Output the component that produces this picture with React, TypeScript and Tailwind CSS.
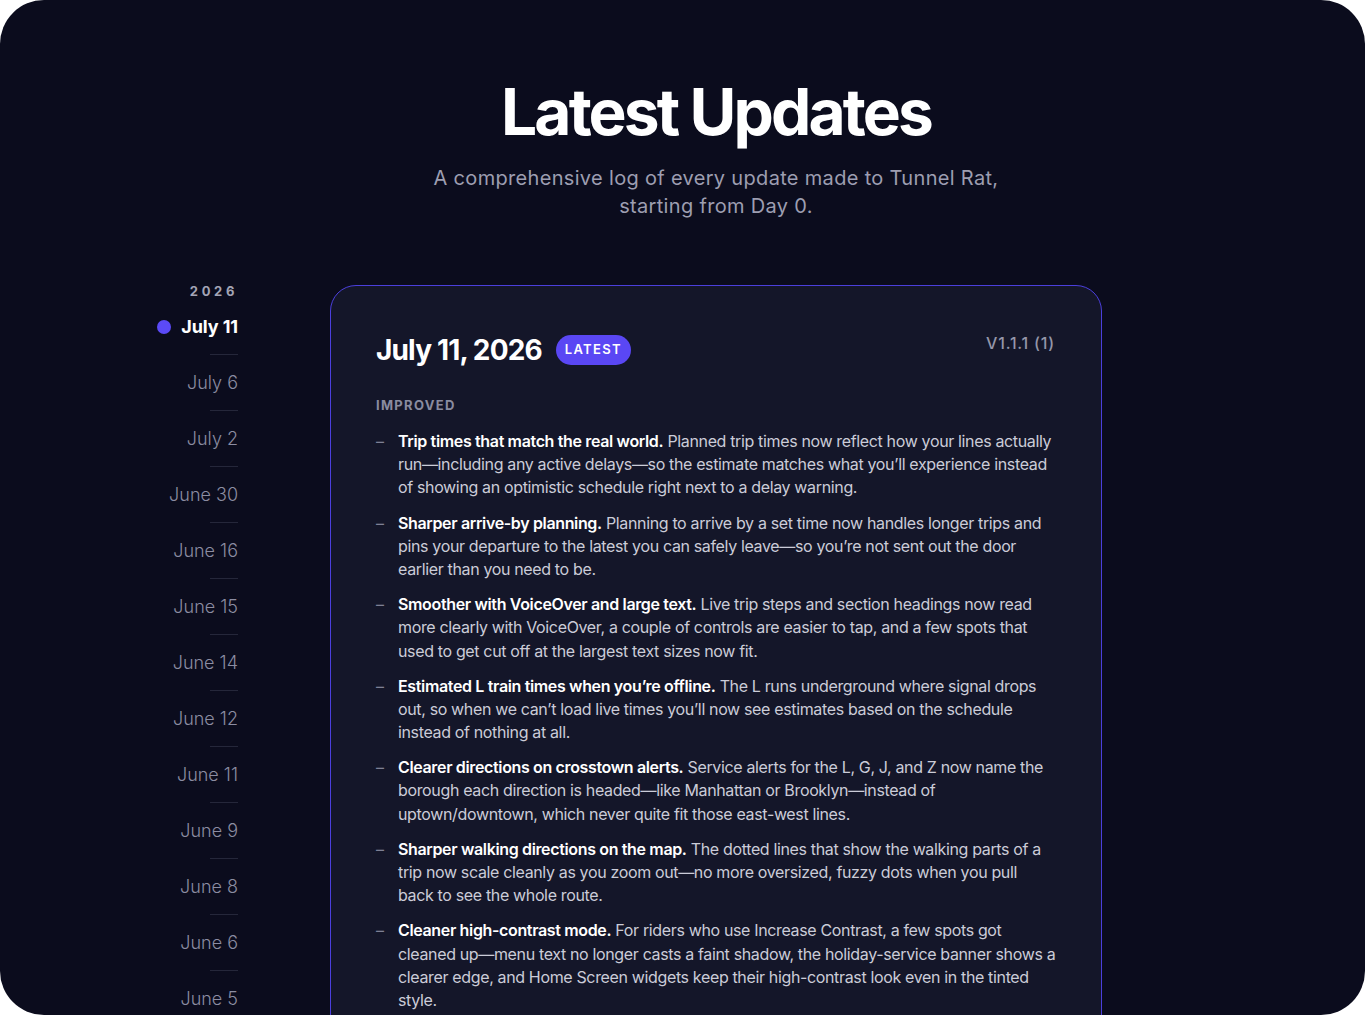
import React from 'react';

const dates = [
  'July 11',
  'July 6',
  'July 2',
  'June 30',
  'June 16',
  'June 15',
  'June 14',
  'June 12',
  'June 11',
  'June 9',
  'June 8',
  'June 6',
  'June 5',
  'June 4',
];

const improved = [
  {
    title: 'Trip times that match the real world.',
    body: 'Planned trip times now reflect how your lines actually run—including any active delays—so the estimate matches what you’ll experience instead of showing an optimistic schedule right next to a delay warning.',
  },
  {
    title: 'Sharper arrive-by planning.',
    body: 'Planning to arrive by a set time now handles longer trips and pins your departure to the latest you can safely leave—so you’re not sent out the door earlier than you need to be.',
  },
  {
    title: 'Smoother with VoiceOver and large text.',
    body: 'Live trip steps and section headings now read more clearly with VoiceOver, a couple of controls are easier to tap, and a few spots that used to get cut off at the largest text sizes now fit.',
  },
  {
    title: 'Estimated L train times when you’re offline.',
    body: 'The L runs underground where signal drops out, so when we can’t load live times you’ll now see estimates based on the schedule instead of nothing at all.',
  },
  {
    title: 'Clearer directions on crosstown alerts.',
    body: 'Service alerts for the L, G, J, and Z now name the borough each direction is headed—like Manhattan or Brooklyn—instead of uptown/downtown, which never quite fit those east-west lines.',
  },
  {
    title: 'Sharper walking directions on the map.',
    body: 'The dotted lines that show the walking parts of a trip now scale cleanly as you zoom out—no more oversized, fuzzy dots when you pull back to see the whole route.',
  },
  {
    title: 'Cleaner high-contrast mode.',
    body: 'For riders who use Increase Contrast, a few spots got cleaned up—menu text no longer casts a faint shadow, the holiday-service banner shows a clearer edge, and Home Screen widgets keep their high-contrast look even in the tinted style.',
  },
  {
    title: 'Faster station search.',
    body: 'Searching for a station now returns results as you type, even on slower connections.',
  },
];

function Sidebar() {
  return (
    <nav className="flex flex-col items-end pr-[92px] pt-[283px]">
      <div className="text-[13px] leading-4 font-bold tracking-[0.28em] text-[#a3a4b5]">2026</div>
      {dates.map((d, i) => (
        <div key={d} className="flex flex-col items-end">
          <div className="h-[55px] flex items-center justify-end">
            {i === 0 ? (
              <span className="flex items-center gap-[10px] text-[18px] font-bold text-white tracking-[-0.005em]">
                <span className="w-[14px] h-[14px] rounded-full bg-[#5b4af7]" />
                {d}
              </span>
            ) : (
              <span className="text-[18px] text-[#8c8da2] font-light">{d}</span>
            )}
          </div>
          <div className="h-px w-7 bg-[#25273a]" />
        </div>
      ))}
    </nav>
  );
}

function Entry() {
  return (
    <div className="rounded-t-[26px] border border-[#4b3fdc] bg-[#141629] pl-[45px] pr-[45px] pt-[46px] pb-12">
      <div className="flex items-start justify-between">
        <div className="flex items-center gap-[14px] h-9">
          <h2 className="text-[28px] leading-9 font-bold text-white tracking-[-0.03em]">July 11, 2026</h2>
          <span className="h-[30px] px-[9px] flex items-center rounded-full bg-[#5a47f4] text-[13px] font-semibold tracking-[0.1em] text-white">
            LATEST
          </span>
        </div>
        <span className="text-[16px] leading-5 mt-[1px] mr-px font-medium tracking-[0.05em] text-[#9596a9]">V1.1.1 (1)</span>
      </div>

      <h3 className="mt-[29px] text-[13px] leading-4 font-bold tracking-[0.1em] text-[#8a8ca0]">IMPROVED</h3>

      <ul className="mt-[17px] flex flex-col gap-3">
        {improved.map((it) => (
          <li key={it.title} className="flex text-[16px] leading-[1.45] tracking-[-0.022em]">
            <span className="w-[22px] shrink-0 text-[#7e8095]">–</span>
            <p className="text-[#cbccd8]">
              <span className="font-semibold text-white">{it.title}</span> {it.body}
            </p>
          </li>
        ))}
      </ul>
    </div>
  );
}

export default function App() {
  return (
    <div className="bg-white min-h-screen" style={{ fontFamily: 'Inter, "Noto Sans", sans-serif' }}>
      <div className="h-[1015px] w-[1365px] rounded-[44px] bg-[#0b0c1d] overflow-hidden flex">
        <div className="w-[330px] shrink-0">
          <Sidebar />
        </div>
        <main className="w-[772px] shrink-0">
          <header className="pt-[80px] flex flex-col items-center text-center">
            <h1 className="text-[64px] leading-[64px] font-bold tracking-[-0.045em] text-white">Latest Updates</h1>
            <p className="mt-5 max-w-[600px] text-[20px] leading-7 tracking-[0.016em] text-[#9d9eb1]">
              A comprehensive log of every update made to Tunnel Rat, starting from Day 0.
            </p>
          </header>
          <div className="mt-[65px]">
            <Entry />
          </div>
        </main>
      </div>
    </div>
  );
}
